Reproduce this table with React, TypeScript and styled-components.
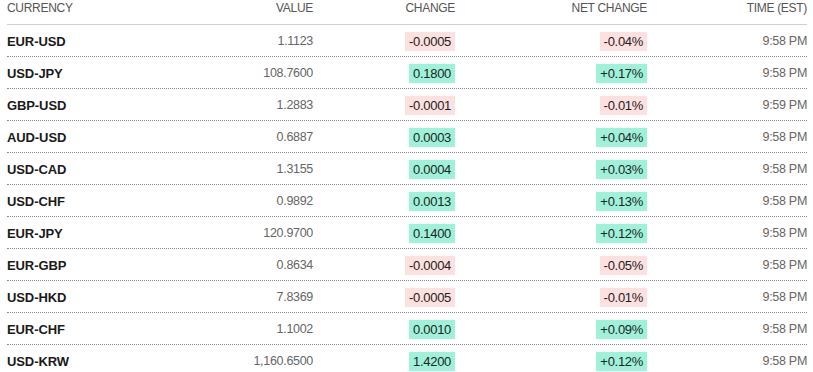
import { createGlobalStyle, styled } from "styled-components";

const GlobalStyle = createGlobalStyle`
  html, body {
    margin: 0;
    padding: 0;
    background: #fff;
  }
  body {
    font-family: "Liberation Sans", Arial, sans-serif;
    color: #1a1a1a;
  }
`;

type Rate = {
  pair: string;
  value: string;
  change: string;
  netChange: string;
  time: string;
};

const rates: Rate[] = [
  { pair: "EUR-USD", value: "1.1123", change: "-0.0005", netChange: "-0.04%", time: "9:58 PM" },
  { pair: "USD-JPY", value: "108.7600", change: "0.1800", netChange: "+0.17%", time: "9:58 PM" },
  { pair: "GBP-USD", value: "1.2883", change: "-0.0001", netChange: "-0.01%", time: "9:59 PM" },
  { pair: "AUD-USD", value: "0.6887", change: "0.0003", netChange: "+0.04%", time: "9:58 PM" },
  { pair: "USD-CAD", value: "1.3155", change: "0.0004", netChange: "+0.03%", time: "9:58 PM" },
  { pair: "USD-CHF", value: "0.9892", change: "0.0013", netChange: "+0.13%", time: "9:58 PM" },
  { pair: "EUR-JPY", value: "120.9700", change: "0.1400", netChange: "+0.12%", time: "9:58 PM" },
  { pair: "EUR-GBP", value: "0.8634", change: "-0.0004", netChange: "-0.05%", time: "9:58 PM" },
  { pair: "USD-HKD", value: "7.8369", change: "-0.0005", netChange: "-0.01%", time: "9:58 PM" },
  { pair: "EUR-CHF", value: "1.1002", change: "0.0010", netChange: "+0.09%", time: "9:58 PM" },
  { pair: "USD-KRW", value: "1,160.6500", change: "1.4200", netChange: "+0.12%", time: "9:58 PM" },
];

const columns = "150px 156px 142px 192px 160px";

const Table = styled.div`
  padding: 0 6px 0 7px;
  width: 800px;
`;

const HeaderRow = styled.div`
  display: grid;
  grid-template-columns: ${columns};
  height: 25px;
  align-items: start;
  padding-top: 1px;
  box-sizing: border-box;
  border-bottom: 1px solid #cfcfcf;
`;

const HeadCell = styled.div<{ $left?: boolean }>`
  font-size: 12px;
  color: #555;
  text-transform: uppercase;
  text-align: ${(p) => (p.$left ? "left" : "right")};
  letter-spacing: -0.3px;
`;

const Row = styled.div`
  display: grid;
  grid-template-columns: ${columns};
  height: 32px;
  box-sizing: border-box;
  align-items: center;
  padding-top: 1px;
  border-bottom: 1px dotted #8a8a8a;
`;

const Pair = styled.div`
  font-size: 13px;
  font-weight: 700;
  color: #1a1a1a;
  letter-spacing: -0.1px;
`;

const Plain = styled.div`
  font-size: 12.5px;
  color: #666;
  text-align: right;
  letter-spacing: -0.3px;
`;

const BadgeCell = styled.div`
  display: flex;
  justify-content: flex-end;
`;

const Badge = styled.span<{ $up: boolean }>`
  display: inline-block;
  font-size: 13px;
  line-height: 19px;
  padding: 0 4px;
  color: #222;
  letter-spacing: -0.3px;
  background: ${(p) => (p.$up ? "#9ff2da" : "#fde0e0")};
`;

export default function App() {
  return (
    <>
      <GlobalStyle />
      <Table>
        <HeaderRow>
          <HeadCell $left>Currency</HeadCell>
          <HeadCell>Value</HeadCell>
          <HeadCell>Change</HeadCell>
          <HeadCell>Net Change</HeadCell>
          <HeadCell>Time (EST)</HeadCell>
        </HeaderRow>
        {rates.map((r) => {
          const up = !r.change.startsWith("-");
          return (
            <Row key={r.pair}>
              <Pair>{r.pair}</Pair>
              <Plain>{r.value}</Plain>
              <BadgeCell>
                <Badge $up={up}>{r.change}</Badge>
              </BadgeCell>
              <BadgeCell>
                <Badge $up={up}>{r.netChange}</Badge>
              </BadgeCell>
              <Plain>{r.time}</Plain>
            </Row>
          );
        })}
      </Table>
    </>
  );
}
